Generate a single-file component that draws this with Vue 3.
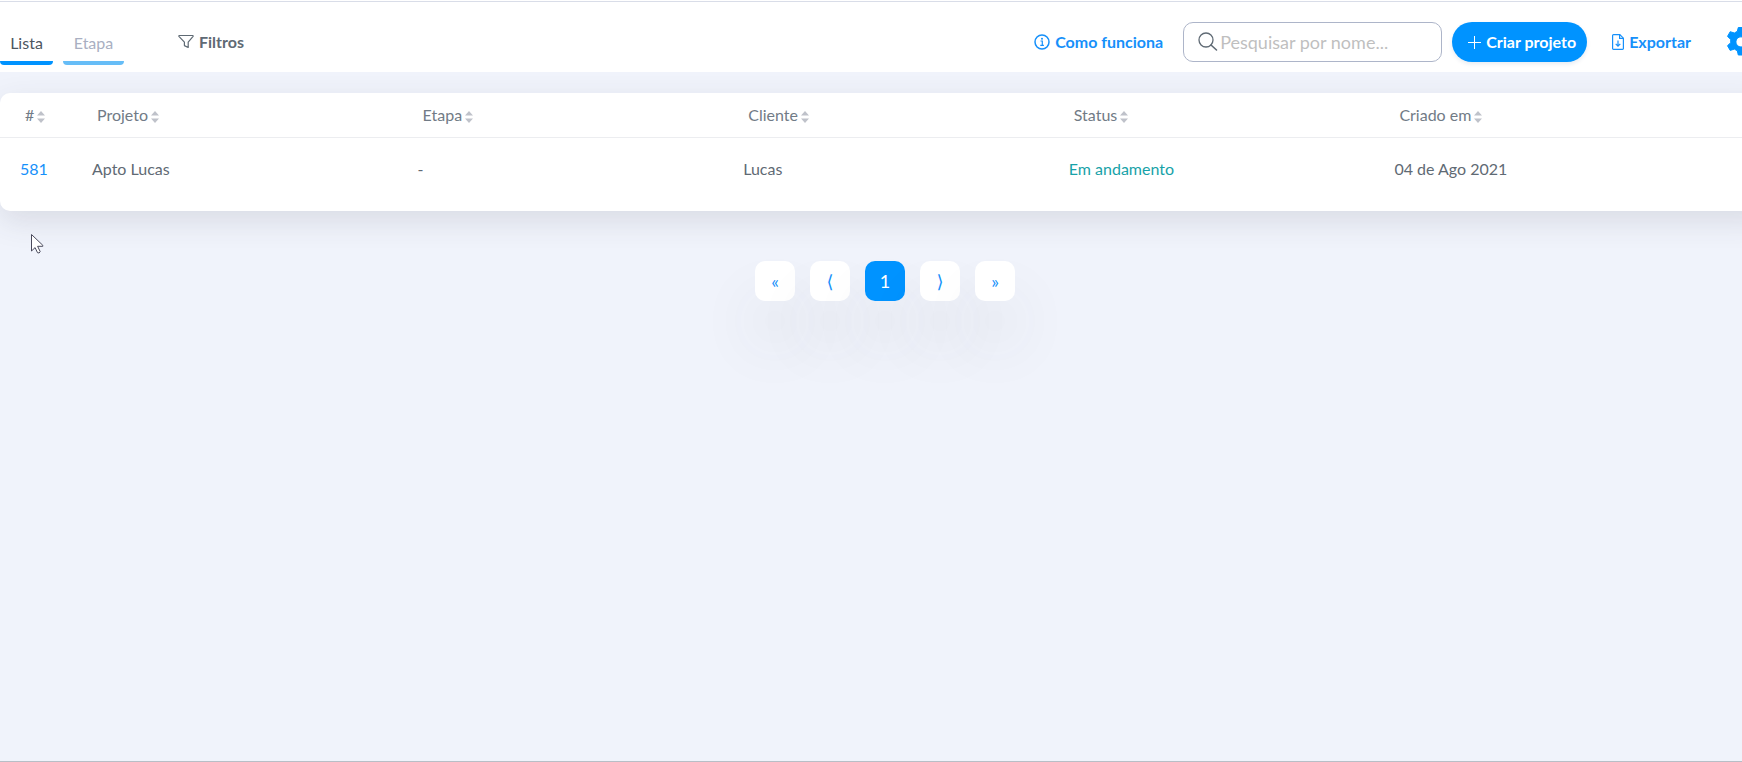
<template>
  <div class="page">
    <div class="page-inner">
      <header class="toolbar">
        <nav class="tabs">
          <a
            v-for="tab in tabs"
            :key="tab"
            href="#"
            :class="['tab', { 'tab-active': tab === activeTab }]"
            @click.prevent="activeTab = tab"
          >{{ tab }}</a>
        </nav>

        <button type="button" class="text-button filter-button">
          <svg width="16" height="16" viewBox="0 0 16 16" aria-hidden="true">
            <path d="M1.300 1.500h13.400a.5.5 0 0 1 .4.8L10.200 8.100v5.400L6.400 11.600V8.100L.9 2.300a.5.5 0 0 1 .4-.8z" fill="none" stroke="currentColor" stroke-width="1.200" stroke-linejoin="round" />
          </svg>
          Filtros
        </button>

        <div class="actions">
          <a href="#" class="text-button help-link">
            <svg width="16" height="16" viewBox="0 0 16 16" aria-hidden="true">
              <circle cx="8" cy="8" r="7" fill="none" stroke="currentColor" stroke-width="1.500" />
              <path d="M6.500 7h1.800v4M6.300 11.300h3.600" fill="none" stroke="currentColor" stroke-width="1.200" />
              <circle cx="8" cy="4.700" r="1" fill="currentColor" />
            </svg>
            Como funciona
          </a>

          <label class="search">
            <svg width="20" height="20" viewBox="0 0 20 20" aria-hidden="true">
              <circle cx="8" cy="8" r="7" fill="none" stroke="currentColor" stroke-width="1.300" />
              <path d="M13 13l5.500 5" stroke="currentColor" stroke-width="1.600" stroke-linecap="round" />
            </svg>
            <input v-model="search" type="text" placeholder="Pesquisar por nome..." aria-label="Pesquisar por nome">
          </label>

          <button type="button" class="create-button">
            <svg width="14" height="14" viewBox="0 0 14 14" aria-hidden="true">
              <path d="M7.500 1v13M1 7.500h13" stroke="currentColor" stroke-width="1" />
            </svg>
            Criar projeto
          </button>

          <button type="button" class="text-button export-button">
            <svg width="12" height="16" viewBox="0 0 12 16" aria-hidden="true">
              <path d="M1.500.6h6.300l3.600 3.600v10.300a.9.9 0 0 1-.9.9h-9a.9.9 0 0 1-.9-.9v-13a.9.9 0 0 1 .9-.9z" fill="none" stroke="currentColor" stroke-width="1.200" />
              <path d="M7.600.6v3.800h3.800M6 6.500v5.500M3.700 9.800L6 12.100l2.300-2.300" fill="none" stroke="currentColor" stroke-width="1.200" />
            </svg>
            Exportar
          </button>

          <button type="button" class="settings-button" aria-label="Configurações">
            <svg width="30" height="30" viewBox="0 0 30 30" aria-hidden="true">
              <path
                fill="currentColor"
                fill-rule="evenodd"
                d="M12.300.5h5.400l1 3.800 2.900 1.700 4.200-1.300 2.700 4.700-3.200 3v3.300l3.200 3-2.700 4.700-4.200-1.300-2.900 1.700-1 4.200h-5.400l-1-4.200-2.900-1.700-4.200 1.300-2.700-4.700 3.200-3v-3.300l-3.200-3 2.700-4.700L8.400 6l2.900-1.700zM15 9.800a5.100 5.100 0 1 0 0 10.200 5.100 5.100 0 0 0 0-10.200z"
                stroke="currentColor"
                stroke-width="1"
                stroke-linejoin="round"
              />
            </svg>
          </button>
        </div>
      </header>

      <main class="content">
        <div class="table-card">
          <table>
            <thead>
              <tr>
                <th v-for="column in columns" :key="column.key" :class="`col-${column.key}`">
                  <button type="button" class="sort-button">
                    {{ column.label }}
                    <svg width="8" height="12" viewBox="0 0 8 12" aria-hidden="true">
                      <path d="M4 0l4 4.500H0zM4 12L0 7.500h8z" fill="currentColor" />
                    </svg>
                  </button>
                </th>
                <th class="col-end"></th>
              </tr>
            </thead>
            <tbody>
              <tr v-for="project in projects" :key="project.id">
                <td><a href="#" class="project-link">{{ project.id }}</a></td>
                <td>{{ project.name }}</td>
                <td>{{ project.stage }}</td>
                <td>{{ project.client }}</td>
                <td class="status">{{ project.status }}</td>
                <td>{{ project.createdAt }}</td>
                <td></td>
              </tr>
            </tbody>
          </table>
        </div>

        <nav class="pagination" aria-label="Paginação">
          <button
            v-for="item in pages"
            :key="item"
            type="button"
            :class="['page-button', { 'page-button-active': item === '1' }]"
          >{{ item }}</button>
        </nav>
      </main>
    </div>

    <svg class="cursor" width="14" height="20" viewBox="0 0 14 20" aria-hidden="true">
      <path d="M.5.500v16.500l3.600-3.400 2.400 5.100 1.600.3 1.100-1.400-2.600-5.300h5.200v-1z" fill="#fff" stroke="#4a4a5c" stroke-width="1" />
    </svg>
  </div>
</template>

<script setup>
import { ref } from 'vue'

const tabs = ['Lista', 'Etapa']
const activeTab = ref('Lista')
const search = ref('')

const columns = [
  { key: 'id', label: '#' },
  { key: 'name', label: 'Projeto' },
  { key: 'stage', label: 'Etapa' },
  { key: 'client', label: 'Cliente' },
  { key: 'status', label: 'Status' },
  { key: 'created', label: 'Criado em' }
]

const projects = [
  {
    id: 581,
    name: 'Apto Lucas',
    stage: '-',
    client: 'Lucas',
    status: 'Em andamento',
    createdAt: '04 de Ago 2021'
  }
]

const pages = ['«', '⟨', '1', '⟩', '»']
</script>

<style>
body {
  background: #f0f3fb;
}
</style>

<style scoped>
.page {
  position: relative;
  box-sizing: border-box;
  min-height: 100vh;
  overflow: hidden;
  border-top: 1px solid #fff;
  border-bottom: 1px solid #b8bec6;
  color: #5f6a74;
  background: #f0f3fb;
  font-family: Lato, "Liberation Sans", "DejaVu Sans", sans-serif;
  font-size: 16px;
  line-height: 20px;
}

/* content runs a little past the right edge of the window */
.page-inner {
  width: calc(100% + 28px);
}

button,
input {
  padding: 0;
  border: 0;
  color: inherit;
  background: none;
  font: inherit;
}

button {
  cursor: pointer;
}

a {
  color: inherit;
  text-decoration: none;
}

svg {
  flex: none;
}

.toolbar {
  box-sizing: border-box;
  height: 71px;
  display: flex;
  align-items: center;
  padding: 10px 14px 0 0;
  border-top: 1px solid #d9dde8;
  background: #fff;
}

.tabs {
  display: flex;
  align-self: flex-end;
  gap: 10px;
  padding-bottom: 7px;
}

.tab {
  box-sizing: border-box;
  min-width: 53px;
  padding: 0 8px 12px;
  color: #a9afc2;
  background: linear-gradient(#66bdf7, #66bdf7) bottom / 100% 4px no-repeat;
  border-radius: 4px;
  text-align: center;
}

.tab:not(.tab-active) {
  min-width: 61px;
}

.tab-active {
  color: #4d565f;
  background-image: linear-gradient(#0093ff, #0093ff);
}

.text-button {
  display: inline-flex;
  align-items: center;
  gap: 5px;
  font-weight: 700;
  white-space: nowrap;
}

.filter-button {
  margin-left: 54px;
}

.actions {
  display: flex;
  align-items: center;
  margin-left: auto;
}

.help-link,
.export-button {
  color: #1690fa;
}

.search {
  box-sizing: border-box;
  width: 259px;
  height: 40px;
  display: flex;
  align-items: center;
  gap: 2px;
  margin: 0 10px 0 20px;
  padding: 0 12px 0 14px;
  border: 1px solid #adb5c9;
  border-radius: 10px;
}

.search input {
  min-width: 0;
  flex: 1;
  outline: 0;
  font-size: 18px;
}

.search input::placeholder {
  color: #bfbfbf;
  opacity: 1;
}

.create-button {
  box-sizing: border-box;
  width: 135px;
  height: 40px;
  display: inline-flex;
  align-items: center;
  justify-content: center;
  gap: 5px;
  padding-left: 4px;
  border-radius: 20px;
  color: #fff;
  background: #0093ff;
  box-shadow: 0 2px 4px rgba(0, 60, 120, 0.1);
  font-weight: 700;
}

.export-button {
  margin: 0 35px 0 25px;
}

.settings-button {
  display: flex;
  color: #0093ff;
}

.content {
  padding-top: 21px;
}

.table-card {
  padding-bottom: 12px;
  border-radius: 10px;
  background: #fff;
  box-shadow: 0 10px 30px rgba(60, 65, 80, 0.13);
}

table {
  width: 100%;
  border-collapse: collapse;
  table-layout: fixed;
}

th,
td {
  padding: 0 20px;
  text-align: left;
  font-weight: 400;
}

th {
  height: 44px;
  padding-left: 25px;
  border-bottom: 1px solid #ecedf0;
  color: #717b86;
}

td {
  height: 61px;
}

.col-id {
  width: 27px;
}

.col-end {
  width: 25px;
}

.sort-button {
  display: inline-flex;
  align-items: center;
  gap: 3px;
  white-space: nowrap;
}

.sort-button svg {
  margin-top: 3px;
  color: #bfc2ca;
}

.project-link {
  color: #1690fa;
}

.status {
  color: #17a2a8;
}

.pagination {
  display: flex;
  justify-content: center;
  gap: 15px;
  padding-top: 50px;
}

.page-button {
  width: 40px;
  height: 40px;
  border-radius: 10px;
  color: #1690fa;
  background: #fff;
  box-shadow: 0 40px 60px rgba(70, 70, 80, 0.1);
  font-size: 18px;
}

.page-button-active {
  color: #fff;
  background: #0093ff;
}

.cursor {
  position: absolute;
  top: 233px;
  left: 31px;
  pointer-events: none;
}
</style>
